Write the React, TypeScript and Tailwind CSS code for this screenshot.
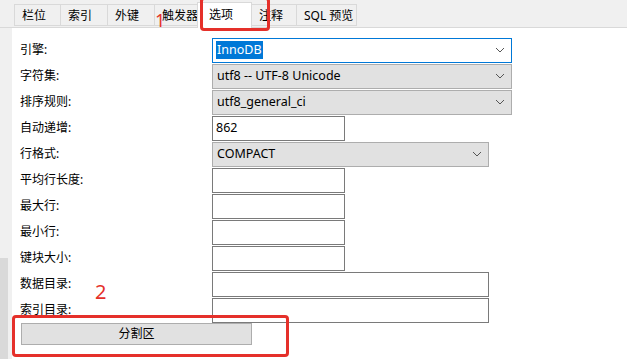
import React from "react";

const FONT = { fontFamily: '"Noto Sans", "Noto Sans CJK SC", sans-serif' };

const Chevron = () => (
  <svg width="10" height="6" viewBox="0 0 10 6" className="shrink-0">
    <polyline points="1,1 5,5 9,1" fill="none" stroke="#555" strokeWidth="1" />
  </svg>
);

function Select({ value, width, focused }: { value: string; width: string; focused?: boolean }) {
  return (
    <div
      className={
        "h-[25px] flex items-center justify-between pl-[3px] pr-[6px] border " +
        width +
        (focused ? " bg-white border-[#0078d7]" : " bg-[#e1e1e1] border-[#adadad]")
      }
    >
      {focused ? (
        <span className="bg-[#0078d7] text-white px-[1px] leading-[18px] text-[12.5px]">{value}</span>
      ) : (
        <span className="text-[12.5px] text-black leading-[18px] pl-[1px]">{value}</span>
      )}
      <Chevron />
    </div>
  );
}

function Input({ value, width }: { value?: string; width: string }) {
  return (
    <div className={"h-[25px] flex items-center pl-[3px] bg-white border border-[#7a7a7a] " + width}>
      <span className="text-[12.5px] text-black">{value}</span>
    </div>
  );
}

const tabs = [
  { label: "栏位", w: "w-[47px]" },
  { label: "索引", w: "w-[48px]" },
  { label: "外键", w: "w-[48px]" },
  { label: "触发器", w: "w-[44px]" },
  { label: "选项", w: "w-[55px]", active: true },
  { label: "注释", w: "w-[46px]" },
  { label: "SQL 预览", w: "w-[61px]" },
];

export default function App() {
  const rows: { label: string; ctrl: React.ReactNode }[] = [
    { label: "引擎:", ctrl: <Select value="InnoDB" width="w-[300px]" focused /> },
    { label: "字符集:", ctrl: <Select value="utf8 -- UTF-8 Unicode" width="w-[300px]" /> },
    { label: "排序规则:", ctrl: <Select value="utf8_general_ci" width="w-[300px]" /> },
    { label: "自动递增:", ctrl: <Input value="862" width="w-[133px]" /> },
    { label: "行格式:", ctrl: <Select value="COMPACT" width="w-[277px]" /> },
    { label: "平均行长度:", ctrl: <Input width="w-[133px]" /> },
    { label: "最大行:", ctrl: <Input width="w-[133px]" /> },
    { label: "最小行:", ctrl: <Input width="w-[133px]" /> },
    { label: "键块大小:", ctrl: <Input width="w-[133px]" /> },
    { label: "数据目录:", ctrl: <Input width="w-[277px]" /> },
    { label: "索引目录:", ctrl: <Input width="w-[277px]" /> },
  ];

  return (
    <div className="relative w-[627px] h-[359px] overflow-hidden bg-[#f0f0f0] flex flex-col" style={FONT}>
      {/* Tab bar */}
      <div className="h-[28px] flex items-end pl-[14px] border-b border-[#d9d9d9]">
        {tabs.map((t) =>
          t.active ? (
            <div
              key={t.label}
              className={"relative z-10 -ml-px h-[26px] -mb-px bg-white border border-b-0 border-[#d9d9d9] pl-[11px] pt-[3px] text-[12px] text-black whitespace-nowrap " + t.w}
            >
              {t.label}
            </div>
          ) : (
            <div
              key={t.label}
              className={"shrink-0 h-[22px] mb-[1px] border border-[#d9d9d9] -ml-px first:ml-0 pl-[7px] pt-[2px] text-[12px] text-black whitespace-nowrap overflow-hidden " + t.w}
            >
              {t.label}
            </div>
          )
        )}
      </div>

      {/* Body */}
      <div className="flex flex-1">
        <div className="w-[12px] flex flex-col">
          <div className="flex-1" />
          <div className="h-[101px] w-[8px] bg-[#d9d9d9]" />
        </div>
        <div className="flex-1 bg-white pt-[9px] flex flex-col">
          {rows.map((r) => (
            <div key={r.label} className="h-[26px] flex items-center">
              <div className="w-[200px] pl-[8px] text-[12px] text-black">{r.label}</div>
              {r.ctrl}
            </div>
          ))}
          <div className="pl-[9px]">
            <button className="w-[231px] h-[22px] bg-[#e1e1e1] border border-[#adadad] text-[12px] text-black flex items-center justify-center">
              分割区
            </button>
          </div>
        </div>
      </div>

      {/* Annotations */}
      <div className="absolute z-20 left-[200px] top-[-3px] w-[70px] h-[34px] border-[3px] border-[#e5302a] rounded-[4px]" />
      <div className="absolute z-20 left-[155px] top-[8px] text-[18px] leading-[24px] text-[#e5302a]">1</div>
      <div className="absolute z-20 left-[12px] top-[315px] w-[277px] h-[42px] border-[3px] border-[#e5302a] rounded-[4px]" />
      <div className="absolute z-20 left-[95px] top-[280px] text-[20px] leading-[24px] text-[#e5302a]">2</div>
    </div>
  );
}
